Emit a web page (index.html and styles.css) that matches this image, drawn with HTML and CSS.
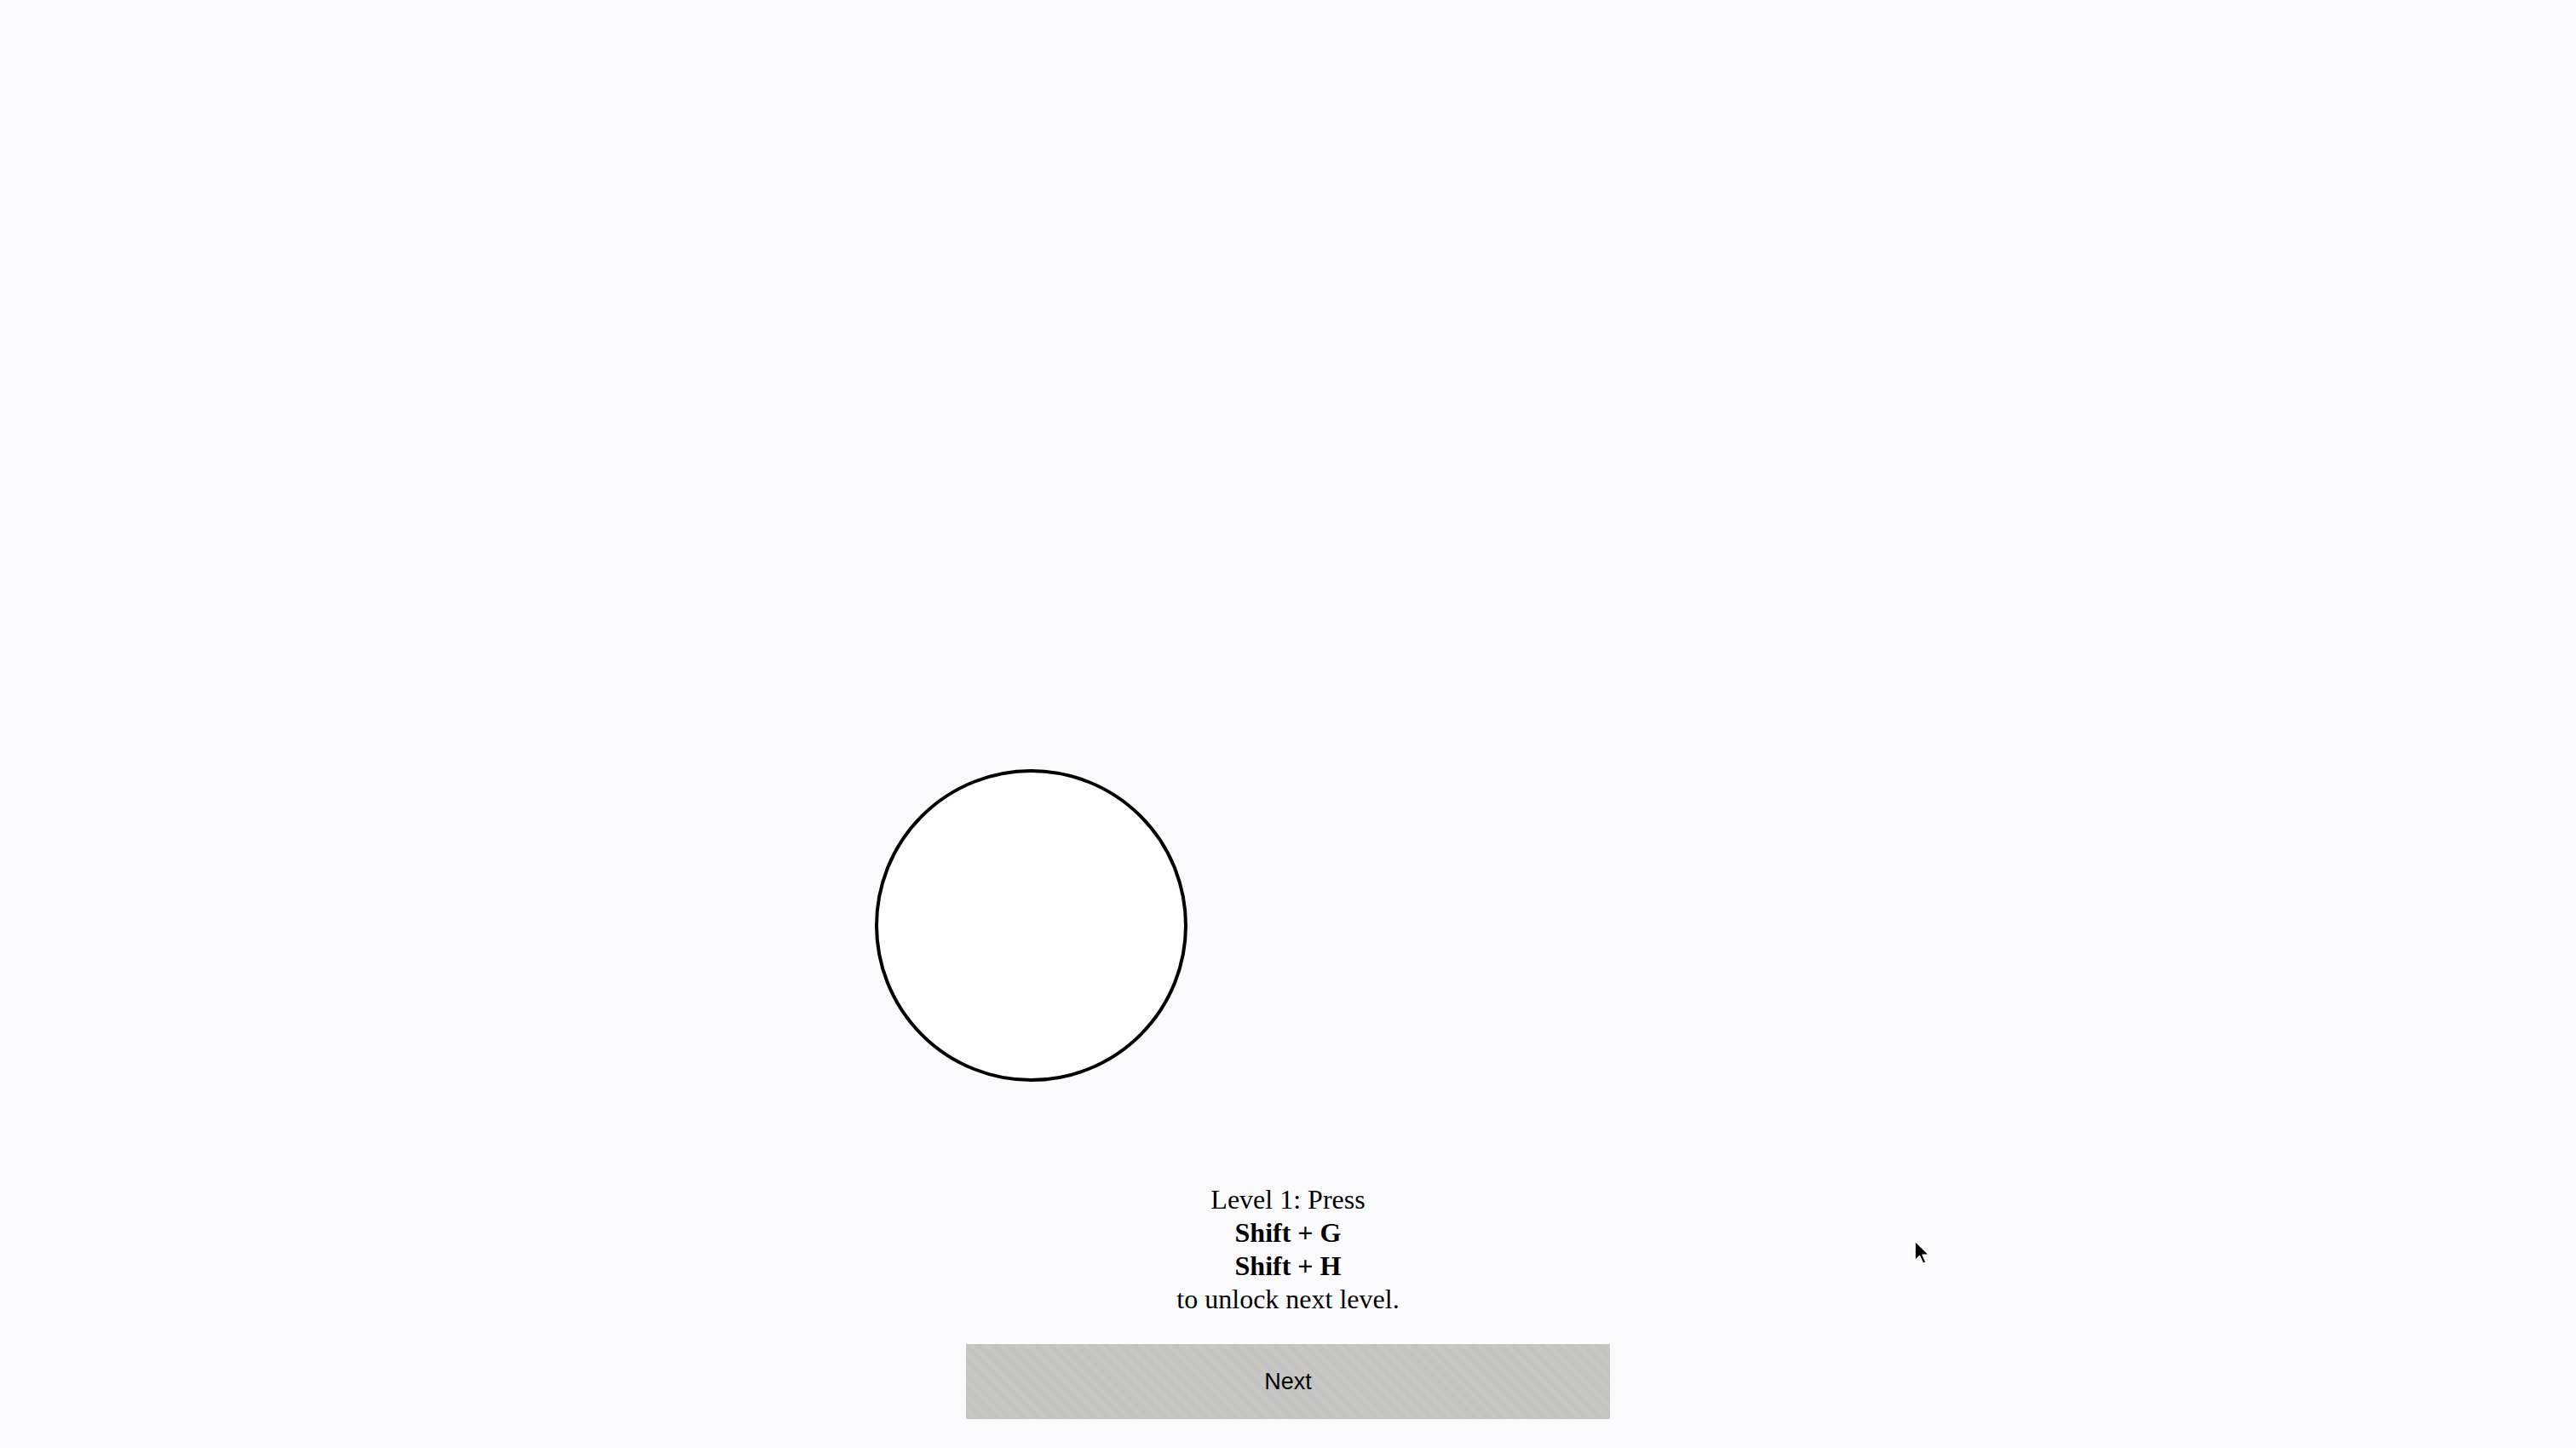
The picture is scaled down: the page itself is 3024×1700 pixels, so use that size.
FILE: index.html
```html
<!DOCTYPE html>
<html lang="en">
<head>
<meta charset="utf-8">
<title>Level 1</title>
<link rel="stylesheet" href="styles.css">
</head>
<body>
<main class="page">
  <section class="stage">
    <div class="circle"></div>
  </section>
  <div class="instructions">
    <div class="line">Level 1: Press</div>
    <div class="line key">Shift + G</div>
    <div class="line key">Shift + H</div>
    <div class="line">to unlock next level.</div>
  </div>
  <button class="next-btn" type="button">Next</button>
  <svg class="cursor" width="22" height="32" viewBox="0 0 22 32" aria-hidden="true">
    <path d="M1 1 L1 24 L6.5 18.5 L10.5 27.5 L14 26 L10 17.2 L17.5 17.2 Z" fill="#000" stroke="#fff" stroke-width="1.5" stroke-linejoin="round"/>
  </svg>
</main>
</body>
</html>
```

FILE: styles.css
```css
html, body {
  margin: 0;
  padding: 0;
  background: #fbfbfd;
}

.page {
  position: relative;
  width: 3024px;
  height: 1700px;
  display: flex;
  flex-direction: column;
  align-items: center;
  overflow: hidden;
}

.stage {
  position: relative;
  width: 3024px;
  height: 1389px;
  flex: none;
}

.circle {
  position: absolute;
  left: 1027px;
  top: 903px;
  width: 359px;
  height: 359px;
  border: 4px solid #000;
  border-radius: 50%;
  background: #fefefe;
}

.instructions {
  display: flex;
  flex-direction: column;
  align-items: center;
  font-family: "Liberation Serif", "Times New Roman", serif;
  font-size: 32px;
  line-height: 39px;
  color: #000;
}

.key {
  font-weight: bold;
}

.next-btn {
  margin-top: 33px;
  width: 756px;
  height: 88px;
  border: none;
  padding: 0;
  background-color: #c6c6c2;
  background-image: repeating-linear-gradient(45deg, rgba(180,180,200,0.35) 0 1px, rgba(210,210,190,0.35) 1px 2px);
  font-family: "Liberation Sans", Arial, sans-serif;
  font-size: 27px;
  color: #000;
  cursor: pointer;
}

.cursor {
  position: absolute;
  left: 2247px;
  top: 1456px;
}
```
